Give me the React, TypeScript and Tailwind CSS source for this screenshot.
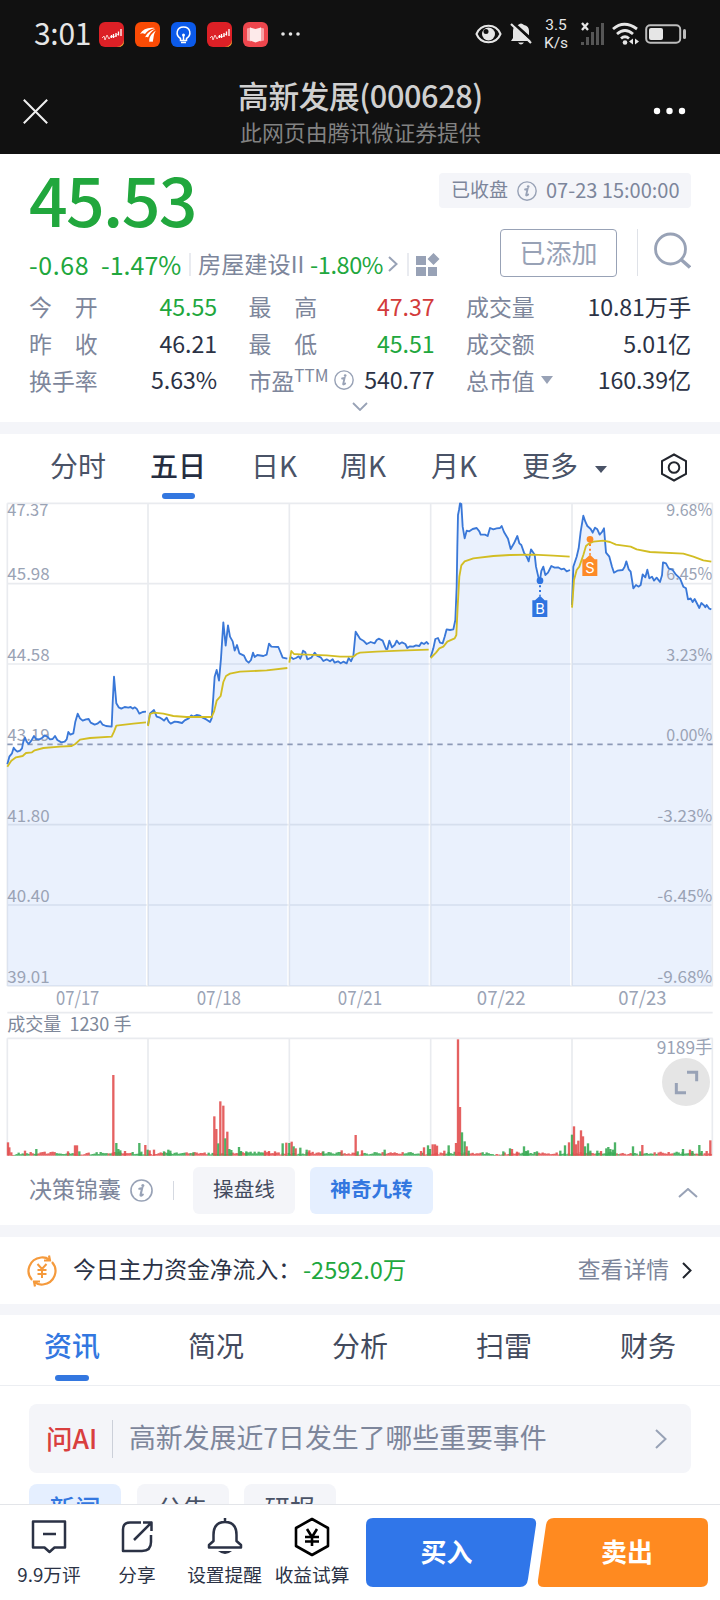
import type { ReactNode } from 'react';

type Point = [number, number];
type Bar = [number, number, 'r' | 'g'];

// chart coordinates are 3 units per pixel
const prices = [
  '22,1033 28,1010 36,1000 41,983 46,990 52,995 60,992 66,985 70,965 75,953 80,965 86,972 94,962 102,948 108,957 118,958 126,954 134,946 142,950 150,958 158,957 165,948 172,960 184,967 194,965 200,958 205,936 211,944 220,940 226,905 233,881 240,895 248,902 258,898 266,897 272,908 284,914 292,911 301,904 308,914 318,918 335,920 338,850 342,770 349,850 356,862 364,866 374,861 385,863 392,861 398,866 404,862 410,866 418,881 428,876 438,875',
  '444,915 450,880 462,870 470,890 480,893 486,897 492,902 500,893 506,905 512,911 524,905 534,906 546,909 554,901 566,895 574,886 580,890 590,885 600,887 608,893 620,899 630,906 635,895 640,830 644,770 650,750 657,782 663,715 670,607 677,677 684,616 690,650 698,664 704,692 711,675 718,700 732,707 739,722 746,728 753,720 759,698 764,711 772,705 790,708 800,704 807,671 814,680 835,681 840,693 848,713 862,716',
  '868,716 874,712 880,717 888,714 896,709 901,716 905,706 909,692 916,697 922,718 934,713 944,698 952,708 962,712 970,723 980,718 990,724 998,718 1004,728 1014,724 1022,730 1030,725 1040,730 1046,714 1053,724 1060,708 1067,635 1080,656 1090,662 1100,672 1112,666 1124,670 1130,660 1136,656 1148,662 1158,687 1162,687 1168,662 1176,682 1184,675 1190,662 1198,672 1206,667 1216,672 1222,684 1230,679 1240,680 1248,676 1258,678 1264,668 1272,672 1280,666 1286,673',
  '1292,712 1300,685 1306,657 1314,654 1320,668 1328,670 1334,650 1340,628 1350,630 1360,628 1366,600 1370,500 1372,380 1374,285 1377,270 1380,250 1384,252 1388,320 1394,355 1400,332 1408,334 1418,327 1430,324 1438,334 1442,344 1455,344 1463,348 1470,324 1480,328 1490,325 1500,324 1505,318 1512,336 1524,356 1532,387 1542,370 1552,348 1558,370 1564,375 1572,398 1580,410 1586,424 1593,388 1604,404 1608,440 1616,475 1620,480 1624,453 1630,440 1636,465 1644,458 1654,438 1664,443 1674,442 1684,448 1692,446 1700,454 1710,450',
  '1716,555 1720,440 1730,410 1736,385 1742,335 1750,287 1756,305 1762,318 1772,327 1778,338 1785,323 1792,328 1799,344 1806,336 1812,325 1818,398 1828,410 1836,440 1842,458 1852,452 1868,450 1874,440 1879,424 1886,448 1892,455 1900,505 1908,495 1916,500 1922,495 1928,463 1936,472 1942,449 1948,475 1956,470 1962,482 1970,473 1980,486 1986,466 1989,427 1998,430 2006,445 2018,450 2028,464 2040,475 2050,500 2058,505 2064,538 2072,535 2078,546 2084,537 2098,564 2104,549 2112,556 2116,562 2120,555 2128,566 2134,568',
];

const averages = [
  '22,1040 34,1022 48,1012 68,1008 78,999 96,997 104,991 130,984 180,980 215,978 226,972 240,959 270,954 335,950 342,935 349,917 400,911 438,907',
  '444,918 450,882 462,878 490,881 520,888 560,891 635,891 642,875 650,842 662,828 670,786 678,768 690,761 720,755 800,751 862,744',
  '868,728 874,693 882,702 900,703 980,706 1020,710 1060,710 1070,702 1080,698 1130,695 1200,692 1286,689',
  '1292,714 1308,698 1318,685 1330,680 1342,665 1364,655 1369,645 1373,560 1378,470 1384,436 1394,424 1420,415 1480,408 1530,405 1600,404 1660,407 1709,410',
  '1716,563 1722,480 1730,450 1738,440 1750,405 1758,378 1768,370 1780,365 1810,362 1830,366 1848,374 1892,380 1910,388 1950,396 2050,401 2080,410 2110,421 2134,425',
];

const volumes: Bar[] = [
  [24, 40, 'r'], [28, 25, 'r'], [34, 10, 'r'], [75, 15, 'r'], [109, 20, 'g'], [204, 13, 'r'], [225, 31, 'r'], [231, 31, 'r'], [238, 13, 'g'],
  [340, 242, 'r'], [349, 38, 'g'], [355, 20, 'g'], [361, 16, 'g'], [375, 14, 'r'], [418, 38, 'g'], [424, 12, 'g'], [436, 32, 'r'], [443, 18, 'g'], [449, 16, 'r'],
  [462, 18, 'r'], [492, 13, 'g'], [505, 18, 'g'], [511, 15, 'g'], [580, 10, 'g'], [643, 118, 'r'], [649, 80, 'r'], [655, 37, 'g'], [661, 163, 'r'],
  [670, 150, 'r'], [676, 52, 'g'], [682, 72, 'r'], [688, 20, 'g'], [694, 17, 'g'], [717, 26, 'g'], [723, 14, 'g'], [739, 13, 'g'], [795, 15, 'r'],
  [807, 14, 'r'], [825, 13, 'r'], [848, 37, 'g'], [859, 39, 'r'], [868, 38, 'g'], [875, 42, 'r'], [881, 28, 'g'], [887, 22, 'r'], [901, 24, 'g'],
  [920, 18, 'g'], [928, 16, 'r'], [970, 13, 'g'], [1025, 16, 'r'], [1067, 62, 'r'], [1073, 13, 'g'], [1086, 16, 'r'], [1154, 18, 'g'], [1263, 14, 'r'],
  [1272, 25, 'r'], [1284, 31, 'g'], [1290, 20, 'g'], [1298, 34, 'r'], [1305, 34, 'r'], [1311, 30, 'r'], [1333, 15, 'r'], [1346, 31, 'g'], [1368, 38, 'r'],
  [1374, 349, 'r'], [1380, 146, 'r'], [1386, 70, 'g'], [1394, 43, 'g'], [1400, 28, 'r'], [1406, 15, 'g'], [1510, 13, 'g'], [1530, 22, 'g'], [1536, 20, 'r'],
  [1551, 12, 'r'], [1572, 28, 'g'], [1578, 14, 'g'], [1584, 16, 'g'], [1611, 13, 'g'], [1681, 15, 'g'], [1695, 31, 'g'], [1707, 40, 'r'], [1716, 63, 'g'],
  [1722, 88, 'r'], [1728, 34, 'r'], [1735, 45, 'r'], [1743, 76, 'r'], [1749, 58, 'r'], [1755, 28, 'g'], [1764, 37, 'g'], [1771, 15, 'g'], [1792, 15, 'g'],
  [1803, 14, 'r'], [1819, 22, 'g'], [1825, 26, 'g'], [1831, 20, 'g'], [1839, 18, 'g'], [1845, 40, 'g'], [1899, 28, 'g'], [1921, 13, 'g'], [1927, 32, 'r'],
  [2049, 20, 'g'], [2070, 18, 'r'], [2077, 14, 'g'], [2098, 32, 'g'], [2105, 14, 'g'], [2120, 14, 'r'], [2131, 46, 'r'],
];

const quietBars: Bar[] = Array.from({ length: 350 }, (_, i) => {
  const n = (i * 37 + ((i * i) % 23) * 11) % 17;
  return [38 + i * 6, 2 + (n % 7) + 4 * Math.abs(Math.sin(i / 11)), Math.sin(i / 3.1) + (n % 5) / 4 > 0.5 ? 'g' : 'r'];
});

const gridX = [22, 444, 868, 1292, 1716, 2137];
const gridY = [250, 491, 732, 1214, 1455, 1698];
const labels = [
  { y: 289, price: '47.37', pct: '9.68%' },
  { y: 480, price: '45.98', pct: '6.45%' },
  { y: 723, price: '44.58', pct: '3.23%' },
  { y: 963, price: '43.19', pct: '0.00%' },
  { y: 1205, price: '41.80', pct: '-3.23%' },
  { y: 1446, price: '40.40', pct: '-6.45%' },
  { y: 1688, price: '39.01', pct: '-9.68%' },
];

const area = (line: string) => {
  const pts = line.split(' ');
  return `${pts[0].split(',')[0]},1698 ${line} ${pts[pts.length - 1].split(',')[0]},1698`;
};

const Marker = ({ at, top, color, name }: { at: Point; top: number; color: string; name: string }) => (
  <g fill={color}>
    <circle cx={at[0]} cy={at[1]} r="10" />
    <path d={`M${at[0]} ${at[1] + 14}V${top}`} stroke={color} strokeWidth="6" strokeDasharray="6 8" />
    <path d={`M${at[0]} ${top}l14 14h8v50h-45v-50h8z`} />
    <text x={at[0]} y={top + 54} textAnchor="middle" fill="#fff" fontSize="44" fontFamily="Inter, sans-serif">{name}</text>
  </g>
);

const Chart = () => (
  <svg className="block w-[720px] h-[658px] overflow-visible" viewBox="0 240 2160 1974" fontFamily="'Noto Sans CJK SC', sans-serif">
    <g stroke="#e9ebef" strokeWidth="5" fill="none">
      {gridY.map((y) => <path key={y} d={`M22 ${y}H2138`} />)}
      {gridX.map((x) => <path key={x} d={`M${x} 250V1698M${x} 1855V2207`} />)}
      <path d="M22 1778H2138M22 1855H2138" />
    </g>
    {prices.map((p) => <polygon key={p} points={area(p)} fill="#3377f0" fillOpacity="0.1" />)}
    <path d="M22 973H2138" stroke="#8d9ab7" strokeWidth="5" strokeDasharray="16 14" />
    <g fill="#9aa3b5" fontSize="50">
      {labels.map((l) => (
        <g key={l.price}>
          <text x="22" y={l.y} textLength={l.price === '47.37' ? 123 : 127} lengthAdjust="spacingAndGlyphs">{l.price}</text>
          <text x="2137" y={l.y} textAnchor="end" textLength={l.pct[0] === '-' ? 165 : 138} lengthAdjust="spacingAndGlyphs">{l.pct}</text>
        </g>
      ))}
    </g>
    <g fill="none" strokeWidth="5.5" strokeLinejoin="round">
      {prices.map((p) => <polyline key={p} points={p} stroke="#3a78d8" />)}
      {averages.map((p) => <polyline key={p} points={p} stroke="#d2bd23" />)}
    </g>
    <Marker at={[1620, 482]} top={527} color="#2f74e0" name="B" />
    <Marker at={[1770, 358]} top={404} color="#fd8a27" name="S" />
    <g fill="#9aa3b5" fontSize="56" textAnchor="middle">
      {['07/17', '07/18', '07/21', '07/22', '07/23'].map((d, i) => (
        <text key={d} x={233 + i * 423.5} y="1755" textLength={i === 0 ? 130 : i === 3 ? 146 : i === 4 ? 145 : 133} lengthAdjust="spacingAndGlyphs">{d}</text>
      ))}
    </g>
    <text x="22" y="1832" fill="#7d8799" fontSize="54" xmlSpace="preserve">成交量  1230 手</text>
    {[...quietBars, ...volumes].map(([x, h, c], i) => (
      <rect key={i} x={x - 3.5} y={2207 - h} width="7" height={h} fill={c === 'r' ? '#e25050' : '#3aab55'} fillOpacity="0.9" />
    ))}
    <text x="2137" y="1901" fill="#9aa3b5" fontSize="53" textAnchor="end" textLength="167" lengthAdjust="spacingAndGlyphs">9189手</text>
    <circle cx="2058" cy="1986" r="72" fill="#e5e5e5" />
    <path d="M2061 1957h29v27M2029 1989v29h29" fill="none" stroke="#98a2b6" strokeWidth="9" />
  </svg>
);

const InfoIcon = ({ className }: { className: string }) => (
  <svg className={className} viewBox="0 0 24 24" fill="none" stroke="#98a2b6">
    <circle cx="12" cy="12" r="11" strokeWidth="1.700" />
    <path d="M9.700 10.200l3-.6-1.700 7.100c-.2 1 1 .9 2.400-.5" strokeWidth="2.200" strokeLinecap="round" />
    <circle cx="13.400" cy="6.700" r="1.600" fill="#98a2b6" stroke="none" />
  </svg>
);

const StockAppIcon = () => (
  <svg className="size-[25px]" viewBox="0 0 25 25">
    <rect width="25" height="25" rx="6" fill="#dc2026" />
    <path d="M18 25q6-1 7-7v1q0 6-6 6z" fill="#f8aa31" />
    <path d="M3 16l2-2 1 4 2-5 2 4 2-3 3 1 4-3" fill="none" stroke="#f9c9c6" strokeWidth="1" />
    <path d="M12.500 13v3M14.500 12v4M17 11v4M19.500 9.500v4M22 7v7" stroke="#fff" strokeWidth="1.300" />
  </svg>
);

const StatusBar = () => (
  <div className="h-[68px] flex items-center pl-[34px] pr-[33px] text-[#e6e6e6]">
    <span className="w-[64.500px] -mt-[4px] text-[30px] leading-none tracking-[-0.3px]">3:01</span>
    <div className="flex gap-[11px]">
      <StockAppIcon />
      <svg className="size-[25px]" viewBox="0 0 25 25">
        <rect width="25" height="25" rx="6" fill="#fa4b05" />
        <path d="M5 12C8 7 13 5 20 6c-5 1-8 3-10 6-2-1-3-1-5 0z" fill="#fff" />
        <path d="M10 15.500c2-4.500 5-7 10.500-8.500-4 2-6 5-7.500 8.500-1-.6-2-.6-3 0z" fill="#fff" />
        <path d="M14.500 20c-1-4 1.500-8 6.500-11.500-3 4-2 8-3.500 11.500-1-.8-2-.8-3 0z" fill="#fff" />
      </svg>
      <svg className="size-[25px]" viewBox="0 0 25 25" fill="none" stroke="#fff" strokeWidth="1.500">
        <rect width="25" height="25" rx="6" fill="#0b5aea" stroke="none" />
        <path d="M9.500 18.500v-2C4 13 5.500 5 12.500 5s8.500 8 3 11.500v2zM10 20.500h5M12.500 18v-4" />
        <circle cx="12.500" cy="13" r="1.500" fill="#fff" stroke="none" />
      </svg>
      <StockAppIcon />
      <svg className="size-[25px]" viewBox="0 0 25 25">
        <rect width="25" height="25" rx="6" fill="#ee464d" />
        <path d="M4 6.500l4-1v14l-4-1zM21 6.500l-4-1v14l4-1z" fill="#f8a2a5" />
        <path d="M7 5.500l5.500 1.500L18 5.500v13l-5.500 2L7 18.500z" fill="#fdeaea" />
      </svg>
    </div>
    <svg className="ml-[12px] w-[20px] h-[6px]" viewBox="0 0 20 6" fill="#e6e6e6">
      <circle cx="3" cy="3" r="1.800" /><circle cx="10.500" cy="3" r="1.800" /><circle cx="18" cy="3" r="1.800" />
    </svg>
    <svg className="ml-auto w-[27px] h-[20px]" viewBox="0 0 27 20" fill="none" stroke="#e6e6e6" strokeWidth="2">
      <path d="M1.500 10C6-1 21-1 25.500 10 21 21 6 21 1.500 10z" />
      <circle cx="13.500" cy="10" r="6.500" fill="#e6e6e6" stroke="none" />
      <circle cx="11" cy="7.500" r="2.500" fill="#111" stroke="none" />
    </svg>
    <svg className="ml-[8px] w-[22px] h-[24px]" viewBox="0 0 22 24">
      <path d="M1 19l2-3V9q0-5 5-6 3-3 6 0 5 1 5 6v7l2 3zM8 20.500h6q-3 4-6 0z" fill="#e6e6e6" />
      <path d="M2 0l21 19" stroke="#111" strokeWidth="3" /><path d="M1 2l20 19" stroke="#e6e6e6" strokeWidth="2.200" />
    </svg>
    <div className="ml-[12px] w-[24px] text-[15.500px] leading-[18px] text-center font-[Roboto,sans-serif]">3.5<br />K/s</div>
    <svg className="ml-[13px] w-[24px] h-[24px]" viewBox="0 0 24 24" fill="#565656">
      <path d="M0 20h3v3H0zM5 15h3v8H5zM10 10h3v13h-3zM15 5h3v18h-3zM20 1h3v22h-3z" />
      <path d="M1 1l6 7M7 1L1 8" stroke="#e6e6e6" strokeWidth="2.300" />
    </svg>
    <svg className="ml-[6px] w-[29px] h-[24px]" viewBox="0 0 29 24" fill="none" stroke="#e6e6e6" strokeWidth="2.800">
      <path d="M2 7q11-9.500 24 0M6 12q8-7 16 0M10 16.500q4-3.500 8 0" />
      <circle cx="14" cy="20.500" r="2.300" fill="#e6e6e6" stroke="none" />
      <path d="M22 16.500v6l-4-3zM24 16.500v6l4-3z" fill="#e6e6e6" stroke="none" />
    </svg>
    <svg className="ml-[5px] w-[42px] h-[20px]" viewBox="0 0 42 20">
      <rect x="1.200" y="1.200" width="34" height="17.600" rx="4" fill="none" stroke="#bdbdbd" strokeWidth="2" />
      <rect x="4" y="4" width="14" height="12" rx="2" fill="#e6e6e6" />
      <rect x="38" y="5" width="3" height="10" rx="1.500" fill="#bdbdbd" />
    </svg>
  </div>
);

const TitleBar = () => (
  <div className="h-[86px] flex justify-between pl-[23px] pr-[34px]">
    <svg className="mt-[31px] size-[25px]" viewBox="0 0 25 25" stroke="#f0f0f0" strokeWidth="2">
      <path d="M.8.8l23.400 23.400M24.200.8L.8 24.200" />
    </svg>
    <div className="flex flex-col items-center pt-[9px] pl-[20px]">
      <div className="text-[30.700px] leading-[36px] font-medium text-[#d0d0d0] tracking-[-0.4px] whitespace-nowrap">高新发展(000628)</div>
      <div className="mt-[5px] text-[21.900px] leading-[28px] text-[#828282]">此网页由腾讯微证券提供</div>
    </div>
    <svg className="mt-[39px] w-[33px] h-[8px]" viewBox="0 0 33 8" fill="#fff">
      <circle cx="4" cy="4" r="3.200" /><circle cx="16.500" cy="4" r="3.200" /><circle cx="29" cy="4" r="3.200" />
    </svg>
  </div>
);

const Stat = ({ label, value, color = 'text-[#2b3245]' }: { label: ReactNode; value: string; color?: string }) => (
  <div className="flex items-center justify-between">
    <span className="flex items-center text-[22.900px] text-[#7d869b] whitespace-pre">{label}</span>
    <span className={`text-[23.200px] tracking-[-0.1px] ${color}`}>{value}</span>
  </div>
);

const Quote = () => (
  <section className="h-[268px] pl-[29px] pr-[29px]">
    <div className="flex justify-between h-[75px]">
      <div className="mt-[10px] h-[66px] text-[68px] leading-[68px] font-medium tracking-[-1.700px] text-[#21a73d]">45.53</div>
      <div className="mt-[19px] h-[35px] w-[252px] pl-[12px] rounded bg-[#f4f5f9] flex items-center text-[#7d869b]">
        <span className="-mt-[2px] text-[19px]">已收盘</span>
        <InfoIcon className="ml-[9px] size-[20px]" />
        <span className="-mt-[2px] ml-[9px] text-[20px] whitespace-nowrap">07-23 15:00:00</span>
      </div>
    </div>
    <div className="flex h-[48px]">
      <div className="flex items-center pt-[20px] h-[50px] leading-[30px] text-[#21a73d]">
        <span className="w-[72px] -mt-[1px] text-[25px] tracking-[0.600px]">-0.68</span>
        <span className="w-[88px] -mt-[1px] text-[25px]">-1.47%</span>
        <i className="w-[2px] h-[23px] bg-[#e9ebf0]" />
        <span className="ml-[7px] w-[112px] -mt-[2px] text-[23.200px] text-[#7d869b]">房屋建设II</span>
        <span className="w-[77px] -mt-[1px] text-[23.500px] tracking-[-0.400px]">-1.80%</span>
        <svg className="ml-[1px] w-[10px] h-[16px]" viewBox="0 0 10 16" fill="none" stroke="#98a2b6" strokeWidth="2"><path d="M1 1l7.500 7L1 15" /></svg>
        <i className="ml-[9px] w-[2px] h-[23px] bg-[#e9ebf0]" />
        <svg className="ml-[7px] w-[24px] h-[23px]" viewBox="0 0 24 23" fill="#98a2b6">
          <path d="M0 3h10v9H0zM0 14h10v9H0zM12 14h9v9h-9zM17.500 0l6 6-6 6-6-6z" />
        </svg>
      </div>
      <div className="ml-auto w-[117px] h-[48px] pb-[4px] border border-[#98a2b6] rounded flex items-center justify-center text-[26px] text-[#98a2b6]">已添加</div>
      <i className="ml-[20px] w-px h-[47px] bg-[#dfe2e8]" />
      <svg className="ml-[16px] mt-[3px] w-[37px] h-[37px]" viewBox="0 0 37 37" fill="none" stroke="#98a2b6" strokeWidth="2.800">
        <circle cx="16.500" cy="17" r="15" /><path d="M27 27.500l9 8" strokeWidth="3.500" />
      </svg>
    </div>
    <div className="mt-[10px] grid grid-cols-[188px_186px_225px] gap-x-[31.500px] grid-rows-[38px_36.500px_36.500px]">
      <Stat label="今　开" value="45.55" color="text-[#21a73d]" />
      <Stat label="最　高" value="47.37" color="text-[#d33b3b]" />
      <Stat label="成交量" value="10.81万手" />
      <Stat label="昨　收" value="46.21" />
      <Stat label="最　低" value="45.51" color="text-[#21a73d]" />
      <Stat label="成交额" value="5.01亿" />
      <Stat label="换手率" value="5.63%" />
      <Stat label={<>市盈<span className="text-[17px] -mt-[10px]">TTM</span><InfoIcon className="ml-[6px] size-[20px]" /></>} value="540.77" />
      <Stat label={<>总市值<svg className="ml-[6px] w-[12px] h-[8px]" viewBox="0 0 12 8" fill="#98a2b6"><path d="M0 0h12L6 8z" /></svg></>} value="160.39亿" />
    </div>
    <svg className="mx-auto mt-[4px] w-[16px] h-[9px]" viewBox="0 0 16 9" fill="none" stroke="#98a2b6" strokeWidth="1.800"><path d="M1 1l7 7 7-7" /></svg>
  </section>
);

const periods = [
  { name: '分时', width: 'w-[100px]' },
  { name: '五日', width: 'w-[101px]', active: true },
  { name: '日K', width: 'w-[89px]' },
  { name: '周K', width: 'w-[91px]' },
  { name: '月K', width: 'w-[91px]' },
  { name: '更多', width: 'w-[73px]' },
];

const PeriodTabs = () => (
  <div className="h-[66px] pl-[50px] flex text-[28px] text-[#4a5367]">
    {periods.map((p) => (
      <div key={p.name} className={`${p.width} pt-[10px]`}>
        <span className={`block leading-[42px] ${p.active ? 'font-medium text-[#252d40]' : ''}`}>{p.name}</span>
        {p.active && <i className="block mt-[7px] ml-[12px] w-[33px] h-[6px] rounded-full bg-[#3377e0]" />}
      </div>
    ))}
    <svg className="mt-[32px] w-[12px] h-[7px]" viewBox="0 0 12 7" fill="#4a5367"><path d="M0 0h12L6 7z" /></svg>
    <svg className="ml-[53px] mt-[19px] w-[28px] h-[29px]" viewBox="0 0 28 29" fill="none" stroke="#23262e" strokeWidth="2">
      <path d="M14 1.500l12 6.500v13L14 27.500 2 21V8z" /><circle cx="14" cy="14.500" r="5.300" />
    </svg>
  </div>
);

const Indicators = () => (
  <div className="h-[67px] pl-[29px] pr-[22px] pb-[3px] flex items-center text-[#7d869b]">
    <span className="text-[23px] -mt-[3px]">决策锦囊</span>
    <InfoIcon className="ml-[9px] size-[23px]" />
    <i className="ml-[20px] w-px h-[19px] bg-[#d5d9e1]" />
    <span className="ml-[19px] w-[102px] h-[47px] pb-[3px] rounded-md bg-[#f4f5f9] text-[#434b5e] text-[20.600px] flex items-center justify-center">操盘线</span>
    <span className="ml-[15px] w-[123px] h-[47px] pb-[3px] rounded-md bg-[#e5efff] text-[#3377e0] font-bold text-[20.600px] flex items-center justify-center">神奇九转</span>
    <svg className="ml-auto mt-[5px] w-[20px] h-[10px]" viewBox="0 0 20 10" fill="none" stroke="#98a2b6" strokeWidth="2"><path d="M1 9l9-8 9 8" /></svg>
  </div>
);

const Divider = ({ className = 'h-[12px]' }: { className?: string }) => <div className={`${className} bg-[#f4f5f9]`} />;

const FundFlow = () => (
  <div className="h-[67px] pl-[27px] pr-[28px] flex items-center text-[22.800px] text-[#2b3245]">
    <svg className="w-[30px] h-[32px]" viewBox="0 0 30 32" fill="none" stroke="#f59a3c" strokeWidth="2.200">
      <path d="M5 25C-2 17 2 4 14 2.500q5-.5 8 2M25 7c7 8 3 21-9 22.500q-5 .5-8-2M17 5.500l6 0-1-5M13 26.500l-6 0 1 5" />
      <path d="M10.500 9l4.500 5 4.500-5M15 14v9M10.500 15h9M10.500 19h9" strokeWidth="2" />
    </svg>
    <span className="ml-[16px] -mt-[2px]">今日主力资金净流入：</span>
    <span className="ml-[2px] -mt-[2px] text-[23.500px] text-[#21a73d]">-2592.0万</span>
    <span className="ml-auto -mt-[2px] text-[#7d869b]">查看详情</span>
    <svg className="ml-[13px] w-[10px] h-[17px]" viewBox="0 0 10 17" fill="none" stroke="#20242d" strokeWidth="2"><path d="M1 1l7.500 7.500L1 16" /></svg>
  </div>
);

const InfoTabs = () => (
  <div className="h-[71px] border-b border-[#eceef2] grid grid-cols-5 text-[28px] text-[#434b5e]">
    {['资讯', '简况', '分析', '扫雷', '财务'].map((t, i) => (
      <div key={t} className={`flex flex-col items-center pt-[9px] leading-[42px] ${i === 0 ? 'font-medium text-[#3377e0]' : ''}`}>
        {t}
        {i === 0 && <i className="mt-[9px] w-[34px] h-[6px] shrink-0 rounded-full bg-[#3377e0]" />}
      </div>
    ))}
  </div>
);

const News = () => (
  <div className="h-[118px] px-[29px] pt-[18px] overflow-hidden">
    <div className="h-[69px] rounded-lg bg-[#f4f5f9] flex items-center pl-[17px] pr-[24px] text-[26.850px] text-[#7d869b]">
      <span className="w-[66px] -mt-[1px] text-[26.500px] font-medium text-[#d93f3f]">问AI</span>
      <i className="w-px h-[38px] bg-[#ccd0d9]" />
      <span className="ml-[16px] -mt-[2px]">高新发展近7日发生了哪些重要事件</span>
      <svg className="ml-auto w-[12px] h-[20px]" viewBox="0 0 12 20" fill="none" stroke="#98a2b6" strokeWidth="2"><path d="M1 1l9.500 9L1 19" /></svg>
    </div>
    <div className="mt-[11px] flex gap-[15.500px] text-[25.500px] leading-[46px] text-center text-[#4a5367]">
      <span className="w-[92px] h-[46px] rounded-lg bg-[#e5efff] text-[#3377e0] font-medium">新闻</span>
      <span className="w-[92px] h-[46px] rounded-lg bg-[#f4f5f9]">公告</span>
      <span className="w-[92px] h-[46px] rounded-lg bg-[#f4f5f9]">研报</span>
    </div>
  </div>
);

const Action = ({ label, width, children }: { label: string; width: string; children: ReactNode }) => (
  <div className={`${width} flex flex-col items-center text-[18.700px] leading-[28px] whitespace-nowrap text-[#2b3245]`}>
    <svg className="w-[40px] h-[42px] mb-[2px]" viewBox="0 0 40 42" fill="none" stroke="#2b3245" strokeWidth="2.500" strokeLinejoin="round">{children}</svg>
    {label}
  </div>
);

const BottomBar = () => (
  <div className="h-[97px] border-t border-[#e3e5e9] flex">
    <div className="w-[366px] pl-[5px] pt-[11px] flex">
      <Action label="9.9万评" width="w-[88px]">
        <path d="M4 5.500h32v26h-10.500l-5 4.500-5-4.500H4zM14 18h13" />
      </Action>
      <Action label="分享" width="w-[88px]">
        <path d="M24 6.500H13q-7 0-7 7V35h19q9 0 9-9v-7M17 24L35 6M26 6.500h8.500v8.500" />
      </Action>
      <Action label="设置提醒" width="w-[87px]">
        <path d="M20 2v4M8.500 19Q8.500 6 20 6t11.500 13v6l4.500 4v2.500H4V29l4.500-4z" />
        <path d="M13 35h14q-7 6-14 0z" fill="#2b3245" stroke="none" />
      </Action>
      <Action label="收益试算" width="w-[88px]">
        <path d="M20 3l16 9v18l-16 9-16-9V12zM15 13l5 8 5-8M20 21v9M13 21h14M13 25.500h14" stroke="#000" strokeWidth="2.600" />
      </Action>
    </div>
    <div className="relative mt-[13px] w-[342px] h-[69px] text-white text-[26px] font-bold">
      <svg className="absolute inset-0 w-[342px] h-[69px]" viewBox="0 0 342 69">
        <path d="M7 0H164Q171 0 170 7L162 61Q161 69 154 69H7Q0 69 0 62V7Q0 0 7 0z" fill="#3076e9" />
        <path d="M188 0H335Q342 0 342 7V62Q342 69 335 69H178Q171 69 172 62L180 7Q181 0 188 0z" fill="#ff8a20" />
      </svg>
      <div className="relative h-full flex">
        <span className="w-[161px] flex items-center justify-center pb-[5px]">买入</span>
        <span className="w-[181px] flex items-center justify-center pb-[5px] pl-[19px]">卖出</span>
      </div>
    </div>
  </div>
);

export default function App() {
  return (
    <div className="w-[720px] h-[1600px] overflow-hidden bg-white font-['Noto_Sans_CJK_SC',sans-serif]">
      <header className="bg-[#111]">
        <StatusBar />
        <TitleBar />
      </header>
      <Quote />
      <Divider />
      <PeriodTabs />
      <Chart />
      <Indicators />
      <Divider />
      <FundFlow />
      <Divider className="h-[11px]" />
      <InfoTabs />
      <News />
      <BottomBar />
    </div>
  );
}
